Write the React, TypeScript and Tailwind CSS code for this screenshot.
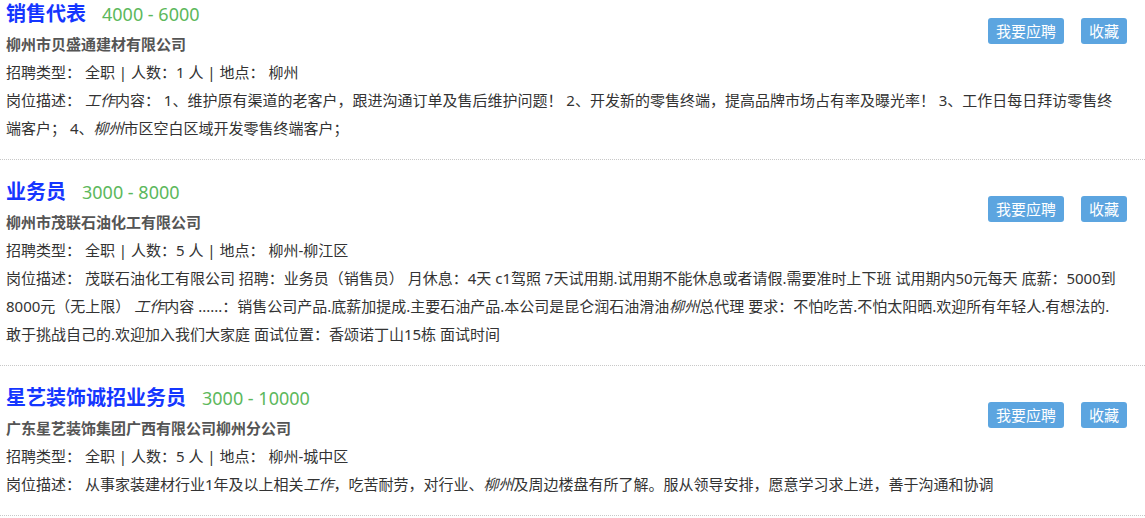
import React from "react";

interface Job {
  title: string;
  salary: string;
  company: string;
  count: number;
  place: string;
  desc: React.ReactNode;
}

const jobs: Job[] = [
  {
    title: "销售代表",
    salary: "4000 - 6000",
    company: "柳州市贝盛通建材有限公司",
    count: 1,
    place: "柳州",
    desc: (
      <>
        <em>工作</em>内容： 1、维护原有渠道的老客户，跟进沟通订单及售后维护问题！ 2、开发新的零售终端，提高品牌市场占有率及曝光率！ 3、工作日每日拜访零售终端客户； 4、<em>柳州</em>市区空白区域开发零售终端客户；
      </>
    ),
  },
  {
    title: "业务员",
    salary: "3000 - 8000",
    company: "柳州市茂联石油化工有限公司",
    count: 5,
    place: "柳州-柳江区",
    desc: (
      <>
        茂联石油化工有限公司 招聘：业务员（销售员） 月休息：4天 c1驾照 7天试用期.试用期不能休息或者请假.需要准时上下班 试用期内50元每天 底薪：5000到8000元（无上限） <em>工作</em>内容 ......：销售公司产品.底薪加提成.主要石油产品.本公司是昆仑润石油滑油<em>柳州</em>总代理 要求：不怕吃苦.不怕太阳晒.欢迎所有年轻人.有想法的.敢于挑战自己的.欢迎加入我们大家庭 面试位置：香颂诺丁山15栋 面试时间
      </>
    ),
  },
  {
    title: "星艺装饰诚招业务员",
    salary: "3000 - 10000",
    company: "广东星艺装饰集团广西有限公司柳州分公司",
    count: 5,
    place: "柳州-城中区",
    desc: (
      <>
        从事家装建材行业1年及以上相关<em>工作</em>，吃苦耐劳，对行业、<em>柳州</em>及周边楼盘有所了解。服从领导安排，愿意学习求上进，善于沟通和协调
      </>
    ),
  },
];

function JobItem({ job }: { job: Job }) {
  return (
    <div className="border-b border-dotted border-[#c8c8c8] pt-4 pb-[17px] pl-[6px] pr-[18px]">
      <div className="flex flex-row justify-between">
        <div className="flex flex-col">
          <div className="flex flex-row items-baseline leading-[32px]">
            <span className="text-[20px] font-bold text-[#1536ff]">{job.title}</span>
            <span className="ml-4 text-[18px] text-[#5cb85c]">{job.salary}</span>
          </div>
          <p className="leading-[28px] font-bold text-[#555]">{job.company}</p>
          <p className="leading-[28px]">
            招聘类型：&nbsp;全职 | 人数：{job.count} 人 | 地点：&nbsp;{job.place}
          </p>
        </div>
        <div className="flex flex-row gap-[17px] mt-5 items-start">
          <button className="bg-[#5ca5e0] text-white rounded-[3px] px-2 leading-[26px]">我要应聘</button>
          <button className="bg-[#5ca5e0] text-white rounded-[3px] px-2 leading-[26px]">收藏</button>
        </div>
      </div>
      <p className="leading-[28px] pr-[3px] [&_em]:italic">
        岗位描述：&nbsp;{job.desc}
      </p>
    </div>
  );
}

export default function App() {
  return (
    <div className="h-[518px] overflow-hidden bg-white text-[15px] text-[#333] font-['Noto_Sans','Noto_Sans_CJK_SC',sans-serif]">
      <div className="-mt-[18px]">
        {jobs.map((job, i) => (
          <JobItem key={i} job={job} />
        ))}
      </div>
    </div>
  );
}
